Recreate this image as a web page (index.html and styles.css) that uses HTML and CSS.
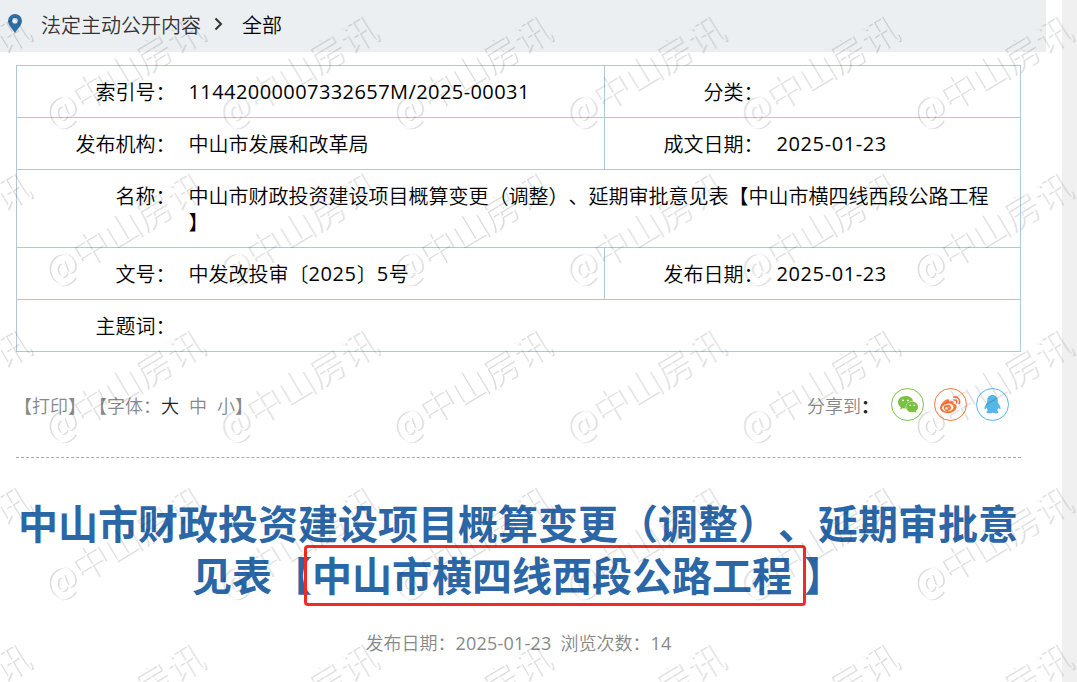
FILE: index.html
```
<!DOCTYPE html>
<html lang="zh-CN">
<head>
  <meta charset="UTF-8">
  <title>中山市发展和改革局</title>
  <link rel="stylesheet" href="styles.css">
</head>
<body>
  <div class="page">
    <div class="crumb">
      <svg class="pin" width="14" height="19" viewBox="0 0 14 19"><path fill="#2e6da4" fill-rule="evenodd" d="M7 0a7 7 0 0 0-7 7c0 3.600 4 7.500 7 12 3-4.500 7-8.400 7-12a7 7 0 0 0-7-7zm0 4a2.800 2.800 0 1 1 0 5.600A2.800 2.800 0 0 1 7 4z"/></svg>
      <a class="crumb-link">法定主动公开内容</a>
      <svg class="arrow" width="9" height="14" viewBox="0 0 9 14"><path fill="none" stroke="#333" stroke-width="2" d="M1.500 1.500l5.500 5.500-5.500 5.500"/></svg>
      <span class="crumb-now">全部</span>
    </div>

    <div class="content">
      <table class="info">
        <colgroup><col class="c1"><col class="c2"><col class="c3"><col class="c4"></colgroup>
        <tr>
          <th>索引号：</th><td class="split"><span class="num long">11442000007332657M/2025-00031</span></td>
          <th>分类：</th><td></td>
        </tr>
        <tr>
          <th>发布机构：</th><td class="split">中山市发展和改革局</td>
          <th>成文日期：</th><td><span class="num">2025-01-23</span></td>
        </tr>
        <tr>
          <th>名称：</th><td colspan="3">中山市财政投资建设项目概算变更（调整）、延期审批意见表【中山市横四线西段公路工程<br>】</td>
        </tr>
        <tr>
          <th>文号：</th><td class="split">中发改投审〔<span class="num">2025</span>〕<span class="num">5</span>号</td>
          <th>发布日期：</th><td><span class="num">2025-01-23</span></td>
        </tr>
        <tr>
          <th>主题词：</th><td colspan="3"></td>
        </tr>
      </table>

      <div class="tools">
        <div class="font-size"><span class="print">【打印】</span><span>【字体：</span><a class="on">大</a><a>中</a><a class="last">小</a><span>】</span></div>
        <div class="share">
          <span>分享到</span><b>：</b>
          <a class="ico wechat">
            <svg width="20" height="18" viewBox="0 0 20 18">
              <path fill="#7ac143" d="M7.600 0C3.400 0 0 2.800 0 6.300c0 2 1.100 3.700 2.800 4.900L2 13.600l2.900-1.400c1 .3 1.800.4 2.900.4-.8-4.400 2.800-7.700 7.300-7.900C14.500 2 11.300 0 7.600 0z"/>
              <path fill="#7ac143" d="M14.200 5.600c-3.400 0-6.100 2.300-6.100 5.300s2.700 5.300 6.100 5.300c.8 0 1.500-.1 2.200-.4l2 1.300-.5-2.100c1.300-1 2.100-2.400 2.100-4.100 0-3-2.600-5.300-5.800-5.300z"/>
              <g fill="#fff"><circle cx="5" cy="4.300" r=".9"/><circle cx="10" cy="4.300" r=".9"/><circle cx="12.200" cy="9.300" r=".8"/><circle cx="16.200" cy="9.300" r=".8"/></g>
            </svg>
          </a>
          <a class="ico weibo">
            <svg width="21" height="18" viewBox="0 0 21 18">
              <path fill="#ff7539" d="M8.300 3.200c1.100.2 1 1.400.6 2.500 2.600-1.100 5.400-.9 4.700 1.900 1.700.5 3.400 1.400 3 3.600C16 14.800 12 17 8 17c-4.500 0-8-2-8-5.300C0 8.200 5.300 2.700 8.300 3.200z"/>
              <ellipse cx="7.800" cy="11.500" rx="5.700" ry="3.900" fill="#fff" transform="rotate(-8 7.800 11.500)"/>
              <ellipse cx="7.500" cy="11.700" rx="3.600" ry="3.100" fill="#ff7539" transform="rotate(-15 7.500 11.700)"/>
              <circle cx="6.400" cy="12.400" r="1.300" fill="#fff"/><circle cx="8.800" cy="11" r=".6" fill="#fff"/>
              <path fill="none" stroke="#ff7539" stroke-width="1.600" stroke-linecap="round" d="M13.600 1c3.900-.7 6.900 2.400 5.800 6.300M14 4c1.800-.3 3.100 1 2.600 2.900"/>
            </svg>
          </a>
          <a class="ico qq">
            <svg width="17" height="19" viewBox="0 0 17 19"><path fill="#56b6e7" d="M8.500 0C5.200 0 3.200 2.500 3.200 5.400v2C2 9 .6 11 .5 13c0 1.300.6 1.500 1.200.7l.8-1c.3 1.100.8 2 1.500 2.700-1 .4-1.600 1-1.600 1.700 0 1.800 4.900 1.600 6.100.4 1.200 1.200 6.100 1.400 6.100-.4 0-.7-.6-1.300-1.600-1.700.7-.7 1.200-1.600 1.500-2.700l.8 1c.6.8 1.200.6 1.200-.7-.1-2-1.500-4-2.700-5.600v-2C13.800 2.500 11.800 0 8.500 0z"/></svg>
          </a>
        </div>
      </div>

      <h1 class="title">中山市财政投资建设项目概算变更（调整）、延期审批意<br>见表【<span class="marked">中山市横四线西段公路工程</span><span class="gap"></span>】</h1>
      <div class="meta">发布日期：<span class="num">2025-01-23</span><span class="views">浏览次数：<span class="num">14</span></span></div>
    </div>
  </div>

  <svg class="watermark" width="1077" height="682">
    <defs>
      <mask id="edge" maskUnits="userSpaceOnUse" x="-20" y="-60" width="240" height="90">
        <rect x="-20" y="-60" width="240" height="90" fill="#fff"/>
        <text fill="#000">@中山房讯</text>
      </mask>
      <pattern id="wm" x="40" y="0" width="173.600" height="157" patternUnits="userSpaceOnUse">
        <g transform="translate(13 129.500) rotate(-31)">
          <g mask="url(#edge)"><text x="1.300" y="1.300">@中山房讯</text></g>
        </g>
      </pattern>
    </defs>
    <rect x="0" y="0" width="1077" height="682" fill="url(#wm)"/>
  </svg>
</body>
</html>
```
FILE: styles.css
```
*,
*::after {
  box-sizing: border-box;
}
body {
  margin: 0;
  background: #f0f0f0;
  font-family: "Noto Sans CJK SC", sans-serif;
  font-size: 20px;
  color: #000;
  text-spacing-trim: space-all;
  overflow: hidden;
}
.page {
  width: 1062px;
  height: 682px;
  background: #fff;
  overflow: hidden;
}
.crumb {
  display: flex;
  align-items: center;
  width: 1046px;
  height: 52px;
  padding: 0 0 4px 8px;
  background: #ebeff2;
}
.pin {
  margin-bottom: 1px;
}
.crumb-link {
  margin-left: 19px;
  color: #333;
  font-weight: 350;
}
.arrow {
  margin: 0 19px 0 13px;
}
.crumb-now {
  font-weight: 350;
}
.content {
  width: 1005px;
  margin: 13px 0 0 16px;
}
.info {
  width: 1004px;
  table-layout: fixed;
  border-collapse: collapse;
  border: 1px solid #b0c8d8;
}
.c1 { width: 159px; }
.c2 { width: 429px; }
.c3 { width: 159px; }
.c4 { width: 257px; }
.info tr {
  border-bottom: 1px solid #b0c8d8;
}
.info th,
.info td {
  height: 52px;
  padding: 13px 0 12px;
  line-height: 26px;
  font-weight: 350;
  vertical-align: top;
}
.info th {
  text-align: right;
}
.info td {
  padding-left: 13px;
  white-space: nowrap;
}
.info .split {
  border-right: 1px solid #b0c8d8;
}
.num {
  font-family: "Open Sans", "Noto Sans", sans-serif;
  font-weight: 400;
  line-height: 1;
  letter-spacing: .6px;
}
.info .num {
  vertical-align: 1px;
}
.num.long {
  letter-spacing: .42px;
}
.tools {
  display: flex;
  justify-content: space-between;
  align-items: center;
  height: 106px;
  border-bottom: 1px dashed #aaa;
  font-size: 18px;
  font-weight: 350;
  color: #888;
}
.font-size {
  display: flex;
  margin-left: -2px;
}
.print {
  margin-right: 3px;
}
.font-size a {
  margin-right: 10px;
}
.font-size .on {
  color: #222;
}
.font-size .last {
  margin-right: 0;
}
.share {
  display: flex;
  align-items: center;
  padding-right: 12px;
}
.share b {
  color: #222;
}
.ico {
  display: flex;
  align-items: center;
  justify-content: center;
  width: 33px;
  height: 33px;
  margin-left: 9.5px;
  border: 1px solid;
  border-radius: 50%;
}
.wechat { color: #7ac143; margin-left: 12px; }
.weibo { color: #ff7539; }
.qq { color: #56b6e7; }
.title {
  margin: 38px 0 0 -1px;
  font-size: 40px;
  line-height: 52px;
  font-weight: bold;
  text-align: center;
  white-space: nowrap;
  color: #2b66a6;
}
.marked {
  position: relative;
}
.marked::after {
  content: "";
  position: absolute;
  left: -8px;
  top: 0;
  width: 502px;
  height: 61px;
  border: 3px solid #f32a20;
  border-radius: 4px;
}
.gap {
  display: inline-block;
  width: 12px;
}
.meta {
  margin-top: 28px;
  font-size: 18px;
  line-height: 28px;
  font-weight: 350;
  text-align: center;
  color: #888;
}
.meta .num {
  letter-spacing: .2px;
}
.views {
  margin-left: 9px;
}
.watermark {
  position: absolute;
  left: 0;
  top: 0;
  pointer-events: none;
}
.watermark text {
  font-family: "Noto Sans CJK SC", sans-serif;
  font-size: 36.5px;
  font-weight: 300;
}
.watermark pattern > g > g > text {
  fill: #000;
  fill-opacity: .14;
}
```
